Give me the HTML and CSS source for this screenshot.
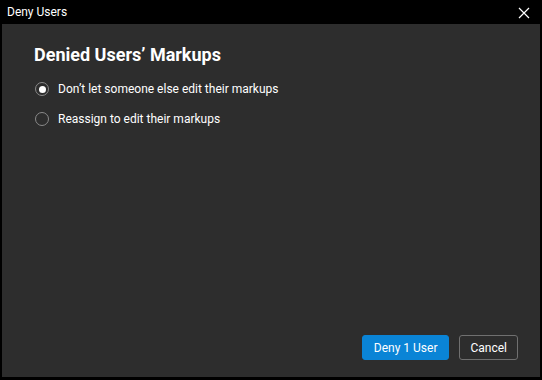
FILE: index.html
```html
<!DOCTYPE html>
<html lang="en">
<head>
    <meta charset="UTF-8">
    <title>Deny Users</title>
    <link rel="stylesheet" href="styles.css">
</head>
<body>

<div class="window">
    <div class="titlebar">
        <span class="title">Deny Users</span>
        <svg class="close" width="12" height="12" viewBox="0 0 12 12">
            <path d="M1 1 L11 11 M11 1 L1 11" stroke="#fff" stroke-width="1.2"/>
        </svg>
    </div>

    <div class="content">
        <h2>Denied Users’ Markups</h2>
        <div class="options">
            <label class="option">
                <span class="radio checked"></span>
                Don’t let someone else edit their markups
            </label>
            <label class="option">
                <span class="radio"></span>
                Reassign to edit their markups
            </label>
        </div>

        <div class="footer">
            <button class="btn primary">Deny 1 User</button>
            <button class="btn">Cancel</button>
        </div>
    </div>
</div>

</body>
</html>
```

FILE: styles.css
```css
body {
    margin: 0;
    background-color: #000;
    font-family: Roboto, "Liberation Sans", sans-serif;
    color: #fff;
}
.window {
    width: 542px;
    height: 380px;
    display: flex;
    flex-direction: column;
}
.titlebar {
    height: 24px;
    display: flex;
    align-items: center;
    justify-content: space-between;
    padding: 0 12px 0 7px;
}
.title {
    font-size: 12px;
}
.close {
    margin-top: 1px;
}
.content {
    flex: 1;
    margin: 0 2px 3px 2px;
    background-color: #2d2d2d;
    padding: 20px 22px 17px 32px;
    display: flex;
    flex-direction: column;
}
h2 {
    margin: 0 0 14px 0;
    font-size: 18px;
    font-weight: bold;
}
.options {
    display: flex;
    flex-direction: column;
    gap: 10px;
}
.option {
    display: flex;
    align-items: center;
    gap: 9px;
    font-size: 12px;
    height: 20px;
}
.radio {
    width: 12px;
    height: 12px;
    border: 1.5px solid #8a8a8a;
    border-radius: 50%;
    display: flex;
    align-items: center;
    justify-content: center;
    margin-left: 1px;
}
.radio.checked::after {
    content: "";
    width: 7px;
    height: 7px;
    border-radius: 50%;
    background-color: #fff;
}
.footer {
    margin-top: auto;
    display: flex;
    justify-content: flex-end;
    gap: 10px;
}
.btn {
    height: 25px;
    padding: 0 10px;
    font-family: Roboto, "Liberation Sans", sans-serif;
    font-size: 12px;
    color: #fff;
    background-color: #2d2d2d;
    border: 1px solid #707070;
    border-radius: 3px;
}
.btn.primary {
    padding: 0 11px;
    background-color: #0a84d6;
    border-color: #0a84d6;
}
```
